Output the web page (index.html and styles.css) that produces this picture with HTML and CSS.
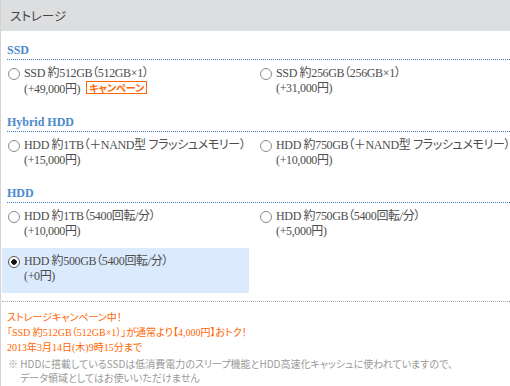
FILE: index.html
```html
<!DOCTYPE html>
<html lang="ja">
<head>
    <meta charset="UTF-8">
    <title>ストレージ</title>
    <link rel="stylesheet" href="styles.css">
</head>
<body>
    <div class="panel">
        <!-- 見出し -->
        <div class="panel-head">ストレージ</div>

        <div class="panel-body">
            <!-- SSD -->
            <h3 class="group-title first">SSD</h3>
            <div class="options">
                <label class="option">
                    <input type="radio" name="storage">
                    <span class="option-text">SSD 約512GB（512GB×1）<br>(+49,000円)<span class="badge">キャンペーン</span></span>
                </label>
                <label class="option">
                    <input type="radio" name="storage">
                    <span class="option-text">SSD 約256GB（256GB×1）<br>(+31,000円)</span>
                </label>
            </div>

            <!-- Hybrid HDD -->
            <h3 class="group-title">Hybrid HDD</h3>
            <div class="options">
                <label class="option">
                    <input type="radio" name="storage">
                    <span class="option-text">HDD 約1TB（＋NAND型 フラッシュメモリー）<br>(+15,000円)</span>
                </label>
                <label class="option">
                    <input type="radio" name="storage">
                    <span class="option-text">HDD 約750GB（＋NAND型 フラッシュメモリー）<br>(+10,000円)</span>
                </label>
            </div>

            <!-- HDD -->
            <h3 class="group-title">HDD</h3>
            <div class="options">
                <label class="option">
                    <input type="radio" name="storage">
                    <span class="option-text">HDD 約1TB（5400回転/分）<br>(+10,000円)</span>
                </label>
                <label class="option">
                    <input type="radio" name="storage">
                    <span class="option-text">HDD 約750GB（5400回転/分）<br>(+5,000円)</span>
                </label>
                <label class="option selected">
                    <input type="radio" name="storage" checked>
                    <span class="option-text">HDD 約500GB（5400回転/分）<br>(+0円)</span>
                </label>
            </div>

            <!-- キャンペーン告知 -->
            <div class="campaign">
                ストレージキャンペーン中！<br>
                「SSD 約512GB（512GB×1）」が通常より【4,000円】おトク！<br>
                2013年3月14日(木)9時15分まで
            </div>

            <p class="note">※ HDDに搭載しているSSDは低消費電力のスリープ機能とHDD高速化キャッシュに使われていますので、<br>データ領域としてはお使いいただけません</p>
        </div>
    </div>
</body>
</html>
```

FILE: styles.css
```css
body {
    margin: 0;
    padding: 0;
    background-color: #fff;
    font-family: "Liberation Serif", "Noto Sans CJK JP", serif;
    font-feature-settings: "palt";
    color: #4d4d4d;
    overflow: hidden;
}

.panel {
    border-left: 1px solid #d4d4d4;
    min-height: 386px;
}

.panel-head {
    height: 31px;
    line-height: 31px;
    padding-left: 9px;
    background-color: #dddee0;
    font-family: "Noto Sans CJK JP", sans-serif;
    font-size: 12.5px;
    color: #444;
}

.panel-body {
    padding-left: 1px;
}

.group-title {
    margin: 8px 0 0 5px;
    padding-bottom: 1px;
    font-size: 12px;
    line-height: 16px;
    font-weight: bold;
    color: #4a88cc;
    border-bottom: 1px dotted #3d7cc0;
}

.group-title.first {
    margin-top: 11px;
}

.options {
    display: grid;
    grid-template-columns: 247px 1fr;
    column-gap: 5px;
}

.option {
    display: flex;
    align-items: flex-start;
    gap: 4px;
    padding: 6px 0 9px 6px;
    font-size: 12px;
    line-height: 15px;
    letter-spacing: -0.35px;
    white-space: nowrap;
    cursor: pointer;
}

.option.selected {
    background-color: #dbeafc;
}

.option input {
    appearance: none;
    -webkit-appearance: none;
    flex: none;
    width: 12px;
    height: 12px;
    margin: 2px 0 0;
    border: 1px solid #8a8a8a;
    border-radius: 50%;
    background-color: #fff;
    box-sizing: border-box;
}

.option input:checked {
    border-color: #555;
    background: radial-gradient(circle, #111 0, #111 2.5px, #fff 3px);
}

.badge {
    display: inline-block;
    margin-left: 6px;
    padding: 0 2px;
    border: 1px solid #ff6600;
    font-family: "Noto Sans CJK JP", sans-serif;
    font-size: 10px;
    line-height: 11px;
    letter-spacing: 0;
    font-weight: bold;
    color: #ff6600;
    vertical-align: 1px;
}

.campaign {
    margin-top: 8px;
    padding: 8px 5px 0;
    border-top: 1px dotted #aaa;
    font-family: "Liberation Serif", "Noto Sans CJK JP", serif;
    font-size: 10px;
    line-height: 15px;
    color: #ff6600;
}

.note {
    margin: 2px 0 0;
    padding-left: 18px;
    text-indent: -12px;
    font-family: "Noto Sans CJK JP", sans-serif;
    font-size: 10px;
    line-height: 14px;
    color: #999;
}
```
